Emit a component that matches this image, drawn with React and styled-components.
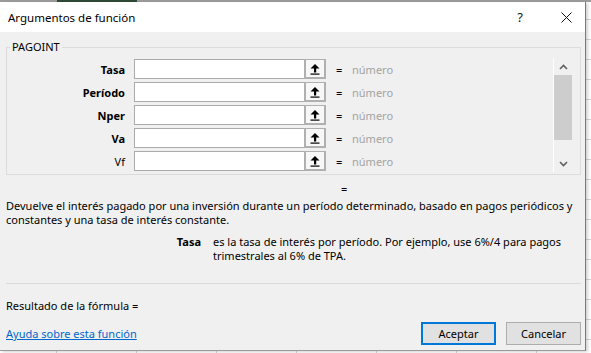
import React from 'react';
import styled, { createGlobalStyle } from 'styled-components';

const GlobalStyle = createGlobalStyle`
  html, body { margin: 0; padding: 0; }
  body {
    width: 591px; height: 353px; overflow: hidden; background: #fff;
    font-family: "Segoe UI", "Noto Sans", sans-serif;
  }
`;

const Sheet = styled.div`
  width: 591px; height: 353px; box-sizing: border-box; padding-top: 2px;
  background-color: #fff;
  background-image:
    linear-gradient(to right, #9c9c9c 0 57px, #2f4a38 57px 137px, #9c9c9c 137px),
    repeating-linear-gradient(to bottom, transparent 0 19px, #d6d6d6 19px 20px),
    repeating-linear-gradient(to right, transparent 0 56px, #d6d6d6 56px 57px, transparent 57px 80px);
  background-size: 100% 2px, 100% 100%, 100% 100%;
  background-repeat: no-repeat, no-repeat, no-repeat;
`;

const Dialog = styled.div`
  width: 586px; height: 349px; box-sizing: border-box;
  background: #f0f0f0;
  border-right: 1px solid #7a7a7a;
  border-bottom: 1px solid #9a9a9a;
  box-shadow: 2px 1px 3px rgba(0,0,0,0.18);
  display: flex; flex-direction: column;
  font-size: 11px; color: #000;
`;

const TitleBar = styled.div`
  height: 30px; background: #fff; display: flex; align-items: center;
  padding-left: 8px; padding-right: 5px;
`;

const Title = styled.div`
  flex: 1; font-size: 11.5px; color: #000;
`;

const CaptionButton = styled.div`
  width: ${p => p.$w}px; margin-right: ${p => p.$mr || 0}px;
  display: flex; justify-content: center; align-items: center;
  font-size: 13px; color: #111;
`;

const Body = styled.div`
  flex: 1; display: flex; flex-direction: column; padding: 0 4px 0 6px;
`;

const GroupBox = styled.fieldset`
  margin: 8px 0 0 0; padding: 5px 0 2px 0;
  border: 1px solid #dcdcdc; min-width: 0;
  display: flex;
`;

const Legend = styled.legend`
  padding: 0 2px; margin-left: 3px; font-size: 11px; line-height: 14px; color: #000;
`;

const ArgList = styled.div`
  flex: 1; display: flex; flex-direction: column; gap: 3px;
`;

const ArgRow = styled.div`
  display: flex; align-items: center; height: 20px;
`;

const ArgLabel = styled.div`
  width: 118px; text-align: right; font-weight: ${p => (p.$required ? 700 : 400)};
  margin-right: 9px; font-size: 11px;
`;

const ArgInput = styled.div`
  width: 170px; height: 20px; box-sizing: border-box;
  background: #fff; border: 1px solid #ababab; border-right: none;
`;

const RefButton = styled.div`
  width: 22px; height: 20px; box-sizing: border-box;
  border: 2px solid #b0b0b0; border-top-width: 1px;
  background: #f7f7f7;
  display: flex; align-items: center; justify-content: center;
`;

const Equals = styled.span`
  margin-left: 10px; width: 16px; font-size: 11px;
`;

const Hint = styled.span`
  color: #a3a3a3; font-size: 11px;
`;

const ScrollBar = styled.div`
  width: 19px; height: 114px; margin: -1px 8px 0 0;
  border-left: 1px solid #fff; box-sizing: border-box;
  display: flex; flex-direction: column; align-items: stretch;
`;

const ScrollArrow = styled.div`
  height: 17px; display: flex; align-items: center; justify-content: center;
`;

const ScrollTrack = styled.div`
  flex: 1; display: flex; flex-direction: column;
`;

const Thumb = styled.div`
  height: 65px; background: #cdcdcd;
`;

const ResultEq = styled.div`
  margin-top: 7px; padding-left: 335px; line-height: 14px;
`;

const Description = styled.div`
  margin-top: 3px; line-height: 14px; white-space: nowrap;
`;

const ArgHelp = styled.div`
  margin-top: 8px; display: grid; grid-template-columns: 195px 1fr; column-gap: 12px;
  line-height: 14px; white-space: nowrap;
`;

const ArgHelpName = styled.div`
  font-weight: 700; text-align: right;
`;

const Separator = styled.div`
  margin-top: auto; height: 1px; background: #dadada;
`;

const ResultLine = styled.div`
  margin-top: 15px; line-height: 14px;
`;

const Footer = styled.div`
  margin-top: 9px; margin-bottom: 5px; display: flex; align-items: center; gap: 10px;
`;

const HelpLink = styled.a`
  flex: 1; color: #0066cc; text-decoration: underline; cursor: pointer;
`;

const Button = styled.button`
  width: 75px; height: 23px; box-sizing: border-box; padding: 0;
  font-family: inherit; font-size: 11px; color: #000;
  background: #e1e1e1;
  border: ${p => (p.$primary ? '2px solid #0078d7' : '1px solid #adadad')};
`;

const UpArrowIcon = () => (
  <svg width="10" height="12" viewBox="0 0 10 12">
    <polygon points="0.5,5.5 5,1 9.5,5.5" fill="#000" />
    <rect x="4" y="5" width="2.2" height="4.5" fill="#000" />
    <rect x="0.5" y="10.5" width="9" height="1.2" fill="#000" />
  </svg>
);

const Chevron = ({ up }) => (
  <svg width="9" height="6" viewBox="0 0 9 6">
    <polyline
      points={up ? '1,5 4.5,1.5 8,5' : '1,1 4.5,4.5 8,1'}
      fill="none" stroke="#606060" strokeWidth="1.6"
    />
  </svg>
);

const CloseIcon = () => (
  <svg width="11" height="11" viewBox="0 0 11 11">
    <path d="M0.5 0.5 L10.5 10.5 M10.5 0.5 L0.5 10.5" stroke="#111" strokeWidth="1" />
  </svg>
);

const args = [
  { name: 'Tasa', required: true },
  { name: 'Período', required: true },
  { name: 'Nper', required: true },
  { name: 'Va', required: true },
  { name: 'Vf', required: false },
];

export default function App() {
  return (
    <>
      <GlobalStyle />
      <Sheet>
        <Dialog>
          <TitleBar>
            <Title>Argumentos de función</Title>
            <CaptionButton $w={20} $mr={22}>?</CaptionButton>
            <CaptionButton $w={28}><CloseIcon /></CaptionButton>
          </TitleBar>
          <Body>
            <GroupBox>
              <Legend>PAGOINT</Legend>
              <ArgList>
                {args.map(a => (
                  <ArgRow key={a.name}>
                    <ArgLabel $required={a.required}>{a.name}</ArgLabel>
                    <ArgInput />
                    <RefButton><UpArrowIcon /></RefButton>
                    <Equals>=</Equals>
                    <Hint>número</Hint>
                  </ArgRow>
                ))}
              </ArgList>
              <ScrollBar>
                <ScrollArrow><Chevron up /></ScrollArrow>
                <ScrollTrack><Thumb /></ScrollTrack>
                <ScrollArrow><Chevron /></ScrollArrow>
              </ScrollBar>
            </GroupBox>
            <ResultEq>=</ResultEq>
            <Description>
              Devuelve el interés pagado por una inversión durante un período determinado, basado en pagos periódicos y
              <br />
              constantes y una tasa de interés constante.
            </Description>
            <ArgHelp>
              <ArgHelpName>Tasa</ArgHelpName>
              <div>
                es la tasa de interés por período. Por ejemplo, use 6%/4 para pagos
                <br />
                trimestrales al 6% de TPA.
              </div>
            </ArgHelp>
            <Separator />
            <ResultLine>Resultado de la fórmula =</ResultLine>
            <Footer>
              <HelpLink>Ayuda sobre esta función</HelpLink>
              <Button $primary>Aceptar</Button>
              <Button>Cancelar</Button>
            </Footer>
          </Body>
        </Dialog>
      </Sheet>
    </>
  );
}
